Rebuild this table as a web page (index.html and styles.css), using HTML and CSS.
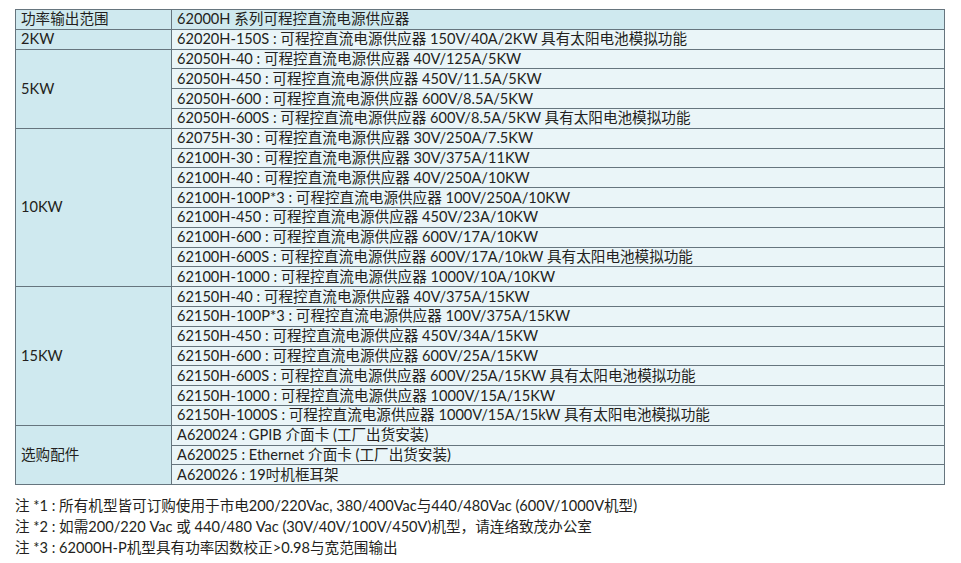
FILE: index.html
```html
<!DOCTYPE html>
<html lang="zh-CN">
<head>
<meta charset="utf-8">
<title>62000H</title>
<link rel="stylesheet" href="styles.css">
</head>
<body>
<div class="page">
<table class="spec">
  <tr class="head"><td class="range">功率输出范围</td><td class="model">62000H 系列可程控直流电源供应器</td></tr>
  <tr><td class="range">2KW</td><td class="model">62020H-150S : 可程控直流电源供应器 150V/40A/2KW 具有太阳电池模拟功能</td></tr>
  <tr><td class="range" rowspan="4">5KW</td><td class="model">62050H-40 : 可程控直流电源供应器 40V/125A/5KW</td></tr>
  <tr><td class="model">62050H-450 : 可程控直流电源供应器 450V/11.5A/5KW</td></tr>
  <tr><td class="model">62050H-600 : 可程控直流电源供应器 600V/8.5A/5KW</td></tr>
  <tr><td class="model">62050H-600S : 可程控直流电源供应器 600V/8.5A/5KW 具有太阳电池模拟功能</td></tr>
  <tr><td class="range" rowspan="8">10KW</td><td class="model">62075H-30 : 可程控直流电源供应器 30V/250A/7.5KW</td></tr>
  <tr><td class="model">62100H-30 : 可程控直流电源供应器 30V/375A/11KW</td></tr>
  <tr><td class="model">62100H-40 : 可程控直流电源供应器 40V/250A/10KW</td></tr>
  <tr><td class="model">62100H-100P*3 : 可程控直流电源供应器 100V/250A/10KW</td></tr>
  <tr><td class="model">62100H-450 : 可程控直流电源供应器 450V/23A/10KW</td></tr>
  <tr><td class="model">62100H-600 : 可程控直流电源供应器 600V/17A/10KW</td></tr>
  <tr><td class="model">62100H-600S : 可程控直流电源供应器 600V/17A/10kW 具有太阳电池模拟功能</td></tr>
  <tr><td class="model">62100H-1000 : 可程控直流电源供应器 1000V/10A/10KW</td></tr>
  <tr><td class="range" rowspan="7">15KW</td><td class="model">62150H-40 : 可程控直流电源供应器 40V/375A/15KW</td></tr>
  <tr><td class="model">62150H-100P*3 : 可程控直流电源供应器 100V/375A/15KW</td></tr>
  <tr><td class="model">62150H-450 : 可程控直流电源供应器 450V/34A/15KW</td></tr>
  <tr><td class="model">62150H-600 : 可程控直流电源供应器 600V/25A/15KW</td></tr>
  <tr><td class="model">62150H-600S : 可程控直流电源供应器 600V/25A/15KW 具有太阳电池模拟功能</td></tr>
  <tr><td class="model">62150H-1000 : 可程控直流电源供应器 1000V/15A/15KW</td></tr>
  <tr><td class="model">62150H-1000S : 可程控直流电源供应器 1000V/15A/15kW 具有太阳电池模拟功能</td></tr>
  <tr><td class="range" rowspan="3">选购配件</td><td class="model">A620024 : GPIB 介面卡 (工厂出货安装)</td></tr>
  <tr><td class="model">A620025 : Ethernet 介面卡 (工厂出货安装)</td></tr>
  <tr><td class="model">A620026 : 19吋机框耳架</td></tr>
</table>
<div class="notes">
  <p>注 *1 : 所有机型皆可订购使用于市电200/220Vac, 380/400Vac与440/480Vac (600V/1000V机型)</p>
  <p>注 *2 : 如需200/220 Vac 或 440/480 Vac (30V/40V/100V/450V)机型，请连络致茂办公室</p>
  <p>注 *3 : 62000H-P机型具有功率因数校正&gt;0.98与宽范围输出</p>
</div>
</div>
</body>
</html>
```
FILE: styles.css
```css
html, body {
  margin: 0;
  padding: 0;
  background: #ffffff;
}
.page {
  padding: 9px 0 0 15px;
  font-family: Lato, "Noto Sans CJK SC", sans-serif;
  font-size: 14.6px;
  color: #231f20;
}
.spec {
  border-collapse: collapse;
  width: 930px;
  table-layout: fixed;
}
.spec td {
  border: 1.5px solid #66757e;
  height: 19.8px;
  padding: 0 0 0 5px;
  line-height: 18px;
  vertical-align: middle;
  white-space: nowrap;
  box-sizing: border-box;
}
.spec td.range {
  width: 156px;
  background: #cfe9ef;
}
.spec td.model {
  background: #eaf5f8;
}
.spec tr.head td.model {
  background: #cfe9ef;
}
.notes {
  margin-top: 10px;
}
.notes p {
  margin: 0;
  line-height: 21px;
}
```
